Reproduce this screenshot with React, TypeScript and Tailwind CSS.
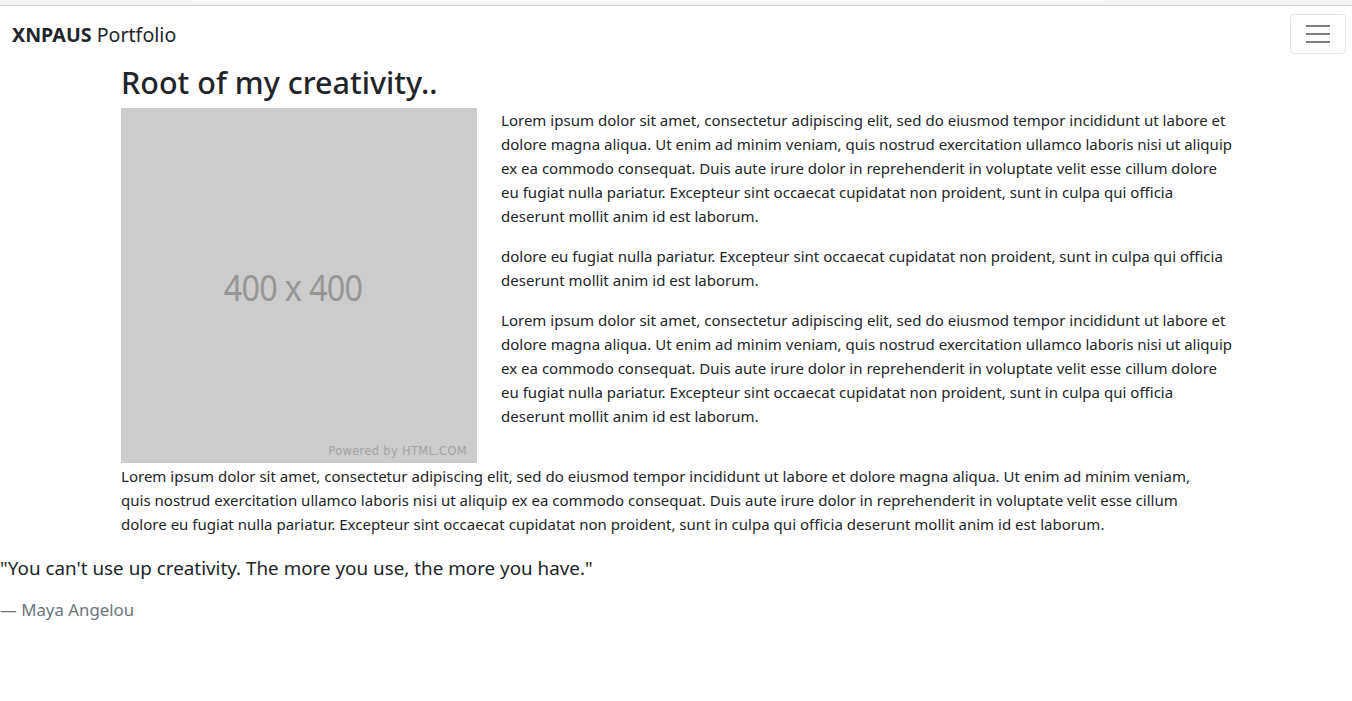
const LOREM =
  "Lorem ipsum dolor sit amet, consectetur adipiscing elit, sed do eiusmod tempor incididunt ut labore et dolore magna aliqua. Ut enim ad minim veniam, quis nostrud exercitation ullamco laboris nisi ut aliquip ex ea commodo consequat. Duis aute irure dolor in reprehenderit in voluptate velit esse cillum dolore eu fugiat nulla pariatur. Excepteur sint occaecat cupidatat non proident, sunt in culpa qui officia deserunt mollit anim id est laborum.";

function Placeholder() {
  return (
    <div className="relative w-[356px] h-[355px] shrink-0 bg-[#cccccc] flex items-center justify-center">
      <span className="mr-[11px] mt-[4px] text-[36px] text-[#969696] tracking-[-0.8px] leading-none font-['Noto_Sans',sans-serif] scale-x-[0.9]">
        400 x 400
      </span>
      <span className="absolute right-[10px] bottom-[6px] text-[11.5px] leading-none text-[#a3a3a3] tracking-[0.3px] font-['DejaVu_Sans',sans-serif]">
        Powered by HTML.COM
      </span>
    </div>
  );
}

export default function App() {
  return (
    <div className="min-h-[701px] bg-white text-[#212529] font-['Noto_Sans',sans-serif] text-[15px] leading-[24px] tracking-[0.02px]">
      <div className="relative h-[6px] bg-[#f4f4f4] border-b border-[#d2d2d2]">
        <div className="absolute left-[190px] right-[244px] top-0 h-[1px] bg-[#fbfbfb]" />
      </div>
      <nav className="flex items-center justify-between h-[56px] pl-[12px] pr-[6px]">
        <span className="text-[19.6px] leading-[30px] mt-[2px]">
          <b className="font-bold">XNPAUS</b> Portfolio
        </span>
        <button className="w-[56px] h-[40px] border border-[#e2e2e2] rounded-[4px] flex flex-col items-center justify-center gap-[6px]">
          <span className="block w-[24px] h-[2px] bg-[#7f7f7f]" />
          <span className="block w-[24px] h-[2px] bg-[#7f7f7f]" />
          <span className="block w-[24px] h-[2px] bg-[#7f7f7f]" />
        </button>
      </nav>
      <main className="pl-[121px] pr-[117px]">
        <h2 className="text-[30.5px] leading-[38px] font-medium mt-[1px] mb-[7px]">Root of my creativity..</h2>
        <div className="flex gap-[24px]">
          <Placeholder />
          <div className="flex flex-col gap-[16px]">
            <p>{LOREM}</p>
            <p>
              dolore eu fugiat nulla pariatur. Excepteur sint occaecat cupidatat non proident, sunt in culpa qui
              officia deserunt mollit anim id est laborum.
            </p>
            <p>{LOREM}</p>
          </div>
        </div>
        <p className="w-[1080px] mt-[1px] mb-[16px]">{LOREM}</p>
      </main>
      <blockquote>
        <p className="text-[18.8px] leading-[30px] mb-[16px] pt-[1px]">
          "You can't use up creativity. The more you use, the more you have."
        </p>
        <footer className="text-[16.8px] leading-[24px] text-[#6c757d] -mt-[1px]">— Maya Angelou</footer>
      </blockquote>
    </div>
  );
}
